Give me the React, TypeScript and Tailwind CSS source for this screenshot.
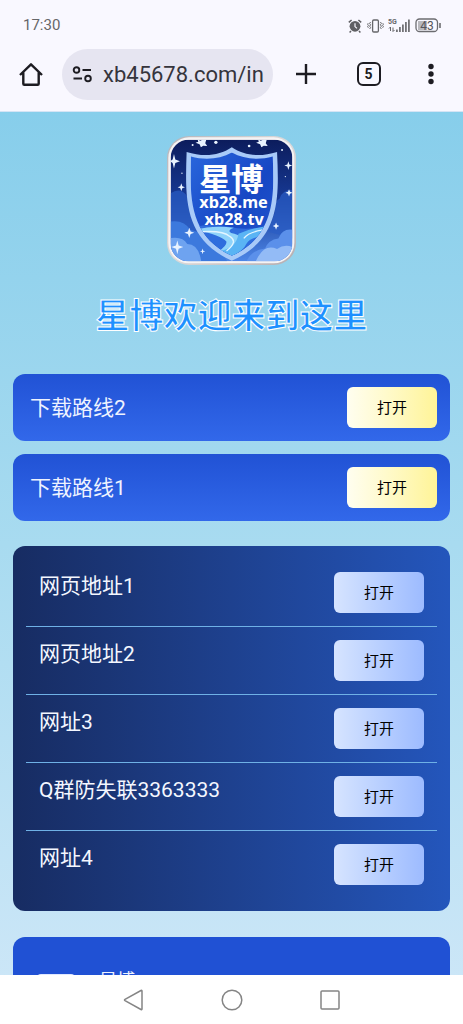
import React from "react";

interface LinkItem {
  name: string;
  href: string;
}

const downloads: LinkItem[] = [
  { name: "下载路线2", href: "#download-2" },
  { name: "下载路线1", href: "#download-1" },
];

const sites: LinkItem[] = [
  { name: "网页地址1", href: "#site-1" },
  { name: "网页地址2", href: "#site-2" },
  { name: "网址3", href: "#site-3" },
  { name: "Q群防失联3363333", href: "#group" },
  { name: "网址4", href: "#site-4" },
];

const StatusBar = () => (
  <div className="flex h-[37px] shrink-0 items-center justify-between pt-[14px] pl-[23px] pr-[22px] text-[15px] text-[#666669]">
    <span>17:30</span>
    <div className="flex items-center gap-1">
      {/* alarm */}
      <svg className="mr-px h-[14px] w-[14px]" viewBox="0 0 14 14" fill="none">
        <circle cx="7" cy="7.3" r="5.4" fill="#5f5f63" />
        <path
          d="M.8 3.4 3.6 1M13.2 3.4 10.4 1M3 12l-1.4 1.5M11 12l1.4 1.5"
          stroke="#5f5f63"
          strokeWidth="1.5"
        />
        <path d="M7 4.2v3.4l2 1.8" stroke="#f9f8ff" strokeWidth="1.2" />
      </svg>
      {/* vibrate */}
      <svg className="h-[14px] w-[17px]" viewBox="0 0 17 14" fill="none" stroke="#66666a">
        <rect x="5.6" y="1" width="5.8" height="12" rx="1.2" strokeWidth="1.3" />
        <path
          d="m3.6 3-1 1.4 1 1.4-1 1.4 1 1.4-1 1.4M1.2 4.2l-.6 1 .8 1.2-.8 1.2.8 1.2M13.4 3l1 1.4-1 1.4 1 1.4-1 1.4 1 1.4M15.8 4.2l.6 1-.8 1.2.8 1.2-.8 1.2"
          strokeWidth="1"
        />
      </svg>
      {/* 5G signal */}
      <svg className="h-[15px] w-[23px]" viewBox="0 0 23 15">
        <text x="0" y="6" fontSize="7" fontWeight="700" fill="#66666a">
          5G
        </text>
        <path
          d="M2.5 9v4M1 10.5 2.5 9M5 13.5v-4M6.5 12 5 13.5"
          stroke="#66666a"
          fill="none"
        />
        <path
          d="M8 11.5h1.8V14H8zM11 9h1.8v5H11zM14 6.5h1.8V14H14zM17 4h1.8v10H17zM20 1.500h1.8V14H20z"
          fill="#727276"
        />
      </svg>
      {/* battery */}
      <svg className="h-[15px] w-[26px]" viewBox="0 0 26 15">
        <rect x="3" y="3" width="9" height="9" fill="#b9b9be" />
        <rect
          x="1"
          y="1"
          width="21.5"
          height="12.5"
          rx="3.5"
          fill="none"
          stroke="#6c6c70"
          strokeWidth="1.3"
        />
        <path d="M25 5v5" stroke="#6c6c70" strokeWidth="1.6" />
        <text x="12" y="11.5" fontSize="12" textAnchor="middle" fill="#55555a">
          43
        </text>
      </svg>
    </div>
  </div>
);

const Toolbar = () => (
  <header className="flex h-[75px] shrink-0 items-center border-b border-[#d5e4f5] text-[#1d1c22]">
    <button type="button" aria-label="主页" className="flex w-[62px] justify-center">
      <svg
        className="h-6 w-6"
        viewBox="0 0 24 24"
        fill="none"
        stroke="currentColor"
        strokeWidth="2.4"
        strokeLinejoin="round"
      >
        <path d="M1 13 12 2.300 23 13M4.300 10v11.700q0 1 1 1h13.400q1 0 1-1V10" />
      </svg>
    </button>
    <div className="flex h-[51px] min-w-0 flex-1 items-center rounded-full bg-[#e6e5f1] pl-[10px] pr-2">
      <svg
        className="h-5 w-5 shrink-0"
        viewBox="0 0 20 20"
        fill="none"
        stroke="currentColor"
        strokeWidth="1.9"
      >
        <circle cx="4.500" cy="6" r="2.800" />
        <path d="M10.500 6H19M1.500 14.500H10" />
        <circle cx="16" cy="14.500" r="2.800" />
      </svg>
      <input
        type="text"
        aria-label="网址"
        defaultValue="xb45678.com/in"
        className="ml-[11px] w-full min-w-0 bg-transparent text-[22px] text-[#35343c] outline-none"
      />
    </div>
    <div className="flex w-[190px] items-center justify-between pl-[21px] pr-5">
      <button type="button" aria-label="新标签页">
        <svg className="h-6 w-6" viewBox="0 0 24 24" stroke="currentColor" strokeWidth="2.4">
          <path d="M2 12h20M12 2v20" />
        </svg>
      </button>
      <button
        type="button"
        aria-label="切换标签页"
        className="flex h-6 w-6 items-center justify-center rounded-md border-2 border-current text-[14px] font-bold"
      >
        5
      </button>
      <button type="button" aria-label="更多">
        <svg className="h-6 w-6" viewBox="0 0 24 24" fill="currentColor">
          <circle cx="12" cy="4.500" r="2.700" />
          <circle cx="12" cy="12" r="2.700" />
          <circle cx="12" cy="19.500" r="2.700" />
        </svg>
      </button>
    </div>
  </header>
);

const Logo = () => (
  <svg className="h-[129px] w-[129px]" viewBox="21 18 388 388" role="img" aria-label="星博">
    <defs>
      <linearGradient id="sky" x1="0" y1="0" x2="0" y2="1">
        <stop offset="0" stopColor="#0c1c5c" />
        <stop offset="0.5" stopColor="#173a96" />
        <stop offset="1" stopColor="#4d86e6" />
      </linearGradient>
      <linearGradient id="shield" x1="0" y1="0" x2="1" y2="1">
        <stop offset="0" stopColor="#2a68de" />
        <stop offset="0.55" stopColor="#1747c4" />
        <stop offset="1" stopColor="#2359cf" />
      </linearGradient>
      <linearGradient id="rim" x1="0" y1="0" x2="1" y2="1">
        <stop offset="0" stopColor="#b4b4ba" />
        <stop offset="0.5" stopColor="#dcdada" />
        <stop offset="1" stopColor="#b5adb0" />
      </linearGradient>
      <clipPath id="tile">
        <rect x="32" y="29" width="366" height="366" rx="54" />
      </clipPath>
      <clipPath id="shieldClip">
        <path d="M216 68C180 88 136 92 93 80C90 200 86 318 216 378C346 318 344 200 339 80C296 92 252 88 216 68Z" />
      </clipPath>
    </defs>
    <rect x="21" y="18" width="388" height="388" rx="66" fill="url(#rim)" />
    <rect x="25" y="22" width="379" height="379" rx="62" fill="#f5f3f4" />
    <g clipPath="url(#tile)">
      <rect x="32" y="29" width="366" height="366" fill="url(#sky)" />
      <path
        d="M32 190q30-20 50 10q22 8 12 40l20 70l-82 20zM398 180q-30 0-38 26q-22 14-14 40l-20 60l72 20z"
        fill="#2a5cc4"
        opacity="0.7"
      />
      <path d="M32 275q40-6 60 26q44 6 50 44q40 10 60 50H32z" fill="#3c79dd" />
      <path d="M32 325q36-6 50 18q34 0 42 52H32z" fill="#6ea3f0" />
      <path d="M398 300q-30-4-42 26q-30 4-40 30q-40 4-56 39h138z" fill="#5b90ea" />
      <path d="M398 352q-24-10-46 6q-40-18-64 37h110z" fill="#93bbf6" />
      <path
        d="M216 52C178 78 130 82 80 66C76 200 68 328 216 393C364 328 358 200 352 66C302 82 254 78 216 52Z"
        fill="#a8caf8"
      />
      <g clipPath="url(#shieldClip)">
        <rect x="80" y="60" width="272" height="330" fill="url(#shield)" />
        <path d="M100 292q60-12 110 0t130-4v100H100z" fill="#2f6ddd" />
        <path
          d="M108 300q50-14 114-6q-22 8-8 16q42 8 32 32q-24 26-70 22q24-14 24-28q-16-20-92-36z"
          fill="#8fd3fa"
        />
        <path
          d="M236 312q40-20 104-24q-6 20-20 30q-46 2-60 24q-10 22-46 40q-24-6-36-18q52-8 58-52z"
          fill="#5ab4f4"
        />
        <path
          d="M126 306q64-4 84 14q26 16-10 44M334 298q-64 4-82 28"
          fill="none"
          stroke="#e2f5ff"
          strokeWidth="4"
        />
      </g>
      {/* stars */}
      <g fill="#e9f3ff">
        <path d="m113 28 8 4 10-4 8 1-3 11 6 8-12-1-7 5-4-9-12-5 8-3zM295 28l8 4 10-4 8 1-3 11 6 8-12-1-7 5-4-9-12-5 8-3z" />
        <path d="m42 72 4 17 14 5-14 5-4 17-4-17-8-5 8-5zM64 160l3 9 8 3-8 3-3 9-3-9-8-3 8-3zM386 94l3 10 9 3-9 3-3 10-3-10-9-3 9-3zM388 178l3 8 8 3-8 3-3 8-3-8-8-3 8-3zM349 278l3 8 7 3-7 3-3 8-3-8-7-3 7-3z" />
        <path d="m52 332 4 15 14 5-14 5-4 17-4-17-14-5 14-5zM88 294l4 11 11 4-11 4-4 12-4-12-11-4 11-4zM128 356l2 7 6 2-6 2-2 7-2-7-6-2 6-2z" />
        <circle cx="168" cy="37" r="5" />
        <circle cx="98" cy="45" r="3" />
        <circle cx="268" cy="48" r="4" />
        <circle cx="367" cy="60" r="3" />
        <circle cx="66" cy="130" r="2" />
        <circle cx="377" cy="140" r="2" />
      </g>
    </g>
    <g fill="#fff" fontWeight="700" textAnchor="middle">
      <text x="214" y="182" fontSize="97" className="font-['Noto_Sans_CJK_SC',sans-serif]">
        星博
      </text>
      <g fontSize="49" className="font-['Noto_Sans',sans-serif]">
        <text x="221" y="236">xb28.me</text>
        <text x="223" y="285">xb28.tv</text>
      </g>
    </g>
  </svg>
);

const NavBar = () => (
  <nav className="flex h-[49px] shrink-0 items-center justify-center gap-[74px] bg-white">
    <button type="button" aria-label="返回">
      <svg className="h-6 w-6" viewBox="0 0 24 24" fill="none" stroke="#858585" strokeWidth="1.5">
        <path d="M20 3v18q0 1-1 .500L3 12.600q-1-.6 0-1.200L19 2.500q1-.5 1 .5z" />
      </svg>
    </button>
    <button type="button" aria-label="主屏幕">
      <svg className="h-6 w-6" viewBox="0 0 24 24" fill="none" stroke="#858585" strokeWidth="1.5">
        <circle cx="12" cy="12" r="9.8" />
      </svg>
    </button>
    <button type="button" aria-label="最近任务">
      <svg className="h-6 w-6" viewBox="0 0 24 24" fill="none" stroke="#858585" strokeWidth="1.5">
        <rect x="3" y="3" width="18" height="18" rx="1" />
      </svg>
    </button>
  </nav>
);

const App: React.FC = () => (
  <div
    lang="zh-CN"
    className="flex h-screen flex-col overflow-hidden bg-[#f9f8ff] font-[Roboto,'Noto_Sans_CJK_SC',sans-serif]"
  >
    <StatusBar />
    <Toolbar />

    <main className="min-h-0 flex-1 overflow-hidden bg-linear-to-b from-[#87ceeb] via-[#a8dbf0] to-[#cbe6f7] px-[13px] pt-6">
      <div className="flex justify-center">
        <Logo />
      </div>
      <h1 className="mt-[26px] text-center text-[34px] leading-[50px] font-bold text-[#1e90ff] [-webkit-text-stroke:1px_#fff]">
        星博欢迎来到这里
      </h1>

      <ul className="mt-[33px] flex flex-col gap-[13px]">
        {downloads.map((item) => (
          <li
            key={item.name}
            className="flex items-center justify-between rounded-xl bg-linear-to-b from-[#2152d5] to-[#3268ea] p-[13px] pl-[17px]"
          >
            <span className="text-[21px] leading-7 text-[#eef3ff]">{item.name}</span>
            <a
              href={item.href}
              className="flex h-[41px] w-[90px] items-center justify-center rounded-md bg-linear-to-r from-[#fffef0] to-[#fff497] text-[15px] leading-5 text-black"
            >
              打开
            </a>
          </li>
        ))}
      </ul>

      <ul className="mt-[25px] rounded-xl bg-linear-to-r from-[#172c62] via-[#1e418f] to-[#2456bc] p-[13px]">
        {sites.map((item) => (
          <li
            key={item.name}
            className="flex items-start justify-between border-b border-[#6fb1e6] p-[13px] last:border-b-0"
          >
            <span className="text-[21px] leading-7 text-[#f4f7ff]">{item.name}</span>
            <a
              href={item.href}
              className="flex h-[41px] w-[90px] items-center justify-center rounded-md bg-linear-to-r from-[#d6e4ff] to-[#9dbbff] text-[15px] leading-5 text-black"
            >
              打开
            </a>
          </li>
        ))}
      </ul>

      <div className="mt-[26px] flex items-start rounded-xl bg-[#2051d4] px-6 pt-8 pb-6">
        <span className="mt-[5px] h-10 w-[38px] rounded-sm bg-[#dfe8ff]" />
        <span className="ml-6 text-[18px] leading-6 text-[#eef3ff]">星博</span>
      </div>
    </main>

    <NavBar />
  </div>
);

export default App;
